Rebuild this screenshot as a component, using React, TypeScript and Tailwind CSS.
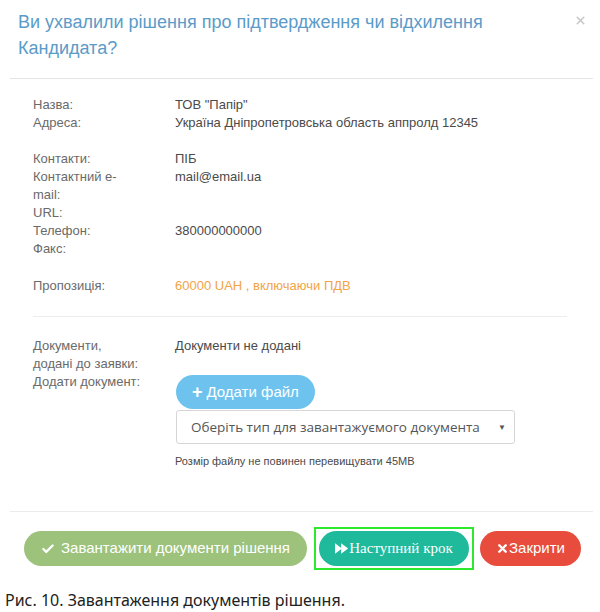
import { Check, X } from 'lucide-react'

interface InfoRow {
  label: string[]
  value?: string
  accent?: boolean
}

const companyRows: InfoRow[] = [
  { label: ['Назва:'], value: 'ТОВ "Папір"' },
  { label: ['Адреса:'], value: 'Україна Дніпропетровська область аппролд 12345' },
]

const contactRows: InfoRow[] = [
  { label: ['Контакти:'], value: 'ПІБ' },
  { label: ['Контактний e-', 'mail:'], value: 'mail@email.ua' },
  { label: ['URL:'] },
  { label: ['Телефон:'], value: '380000000000' },
  { label: ['Факс:'] },
]

function Row({ label, value, accent }: InfoRow) {
  return (
    <div className="flex">
      <div className="w-[142px] shrink-0 pr-[30px] text-[#6a6a6a]">
        {label.map((l) => (
          <div key={l}>{l}</div>
        ))}
      </div>
      <div className={accent ? 'text-[#f2a445]' : 'text-[#4a4a4a]'}>{value}</div>
    </div>
  )
}

function ForwardIcon() {
  return (
    <svg viewBox="0 0 16 12" className="h-[11px] w-[14px]" fill="currentColor">
      <path d="M0 0 L8 6 L0 12 Z" />
      <path d="M7 0 L15 6 L7 12 Z" />
    </svg>
  )
}

export default function App() {
  return (
    <div className="w-[600px] h-[612px] bg-white flex flex-col font-['Liberation_Sans',Arial,sans-serif]">
      {/* Header */}
      <div className="ml-[10px] mr-[7px] border-b border-[#e5e5e5] flex justify-between pt-[9px] pb-[17px]">
        <h3 className="pl-[8px] w-[520px] text-[18px] leading-[26px] text-[#5a9bc8]">
          Ви ухвалили рішення про підтвердження чи відхилення Кандидата?
        </h3>
        <X className="mt-[5px] mr-[6px] h-[13px] w-[13px] text-[#c8c8c8]" strokeWidth={3} />
      </div>

      {/* Body */}
      <div className="px-[33px] pt-[17px] text-[13px] leading-[18px]">
        <div>
          {companyRows.map((r) => (
            <Row key={r.label[0]} {...r} />
          ))}
        </div>
        <div className="mt-[18px]">
          {contactRows.map((r) => (
            <Row key={r.label[0]} {...r} />
          ))}
        </div>
        <div className="mt-[19px]">
          <Row label={['Пропозиція:']} value="60000 UAH , включаючи ПДВ" accent />
        </div>

        <div className="mt-[21px] border-t border-[#ececec]" />

        <div className="flex pt-[20px]">
          <div className="w-[142px] shrink-0 pr-[30px] text-[#6a6a6a]">
            <div>Документи,</div>
            <div>додані до заявки:</div>
            <div>Додати документ:</div>
          </div>
          <div className="flex flex-col items-start">
            <div className="text-[#4a4a4a]">Документи не додані</div>
            <button className="mt-[20px] ml-[1px] h-[34px] px-[16px] rounded-full bg-[#6ec3ee] text-white text-[15px] flex items-center gap-[4px]">
              <span className="text-[18px] font-bold leading-none">+</span>
              <span>Додати файл</span>
            </button>
            <div className="mt-[1px] ml-[1px] w-[339px] h-[34px] border border-[#d6d6d6] rounded-[3px] flex items-center justify-between pl-[14px] pr-[8px] text-[13.5px] text-[#555] font-['Open_Sans',sans-serif]">
              <span>Оберіть тип для завантажуємого документа</span>
              <span className="text-[8px] text-[#555]">▼</span>
            </div>
            <div className="mt-[8px] text-[11px] text-[#4a4a4a]">Розмір файлу не повинен перевищувати 45MB</div>
          </div>
        </div>
      </div>

      {/* Footer */}
      <div className="mt-auto ml-[10px] mr-[7px] border-t border-[#ececec] pt-[15px] flex items-center">
        <button className="ml-[14px] w-[283px] h-[35px] rounded-full bg-[#9dc27c] text-white text-[15px] flex items-center justify-center gap-[6px]">
          <Check className="h-[14px] w-[14px]" strokeWidth={4} />
          <span>Завантажити документи рішення</span>
        </button>
        <div className="ml-[7px] border-2 border-[#2ee82e] px-[3px] py-[2px]">
          <button className="w-[150px] h-[35px] rounded-full bg-[#1fb99b] text-white text-[15px] font-['Liberation_Serif',serif] flex items-center justify-center">
            <ForwardIcon />
            <span>Наступний крок</span>
          </button>
        </div>
        <button className="ml-[6px] w-[101px] h-[35px] rounded-full bg-[#e74c3c] text-white text-[15px] flex items-center justify-center">
          <X className="h-[13px] w-[13px]" strokeWidth={4.5} />
          <span>Закрити</span>
        </button>
      </div>

      <div className="pl-[5px] pt-[20px] h-[42px] text-[16px] leading-[20px] text-[#222] font-['Noto_Sans',sans-serif]">
        Рис. 10. Завантаження документів рішення.
      </div>
    </div>
  )
}
